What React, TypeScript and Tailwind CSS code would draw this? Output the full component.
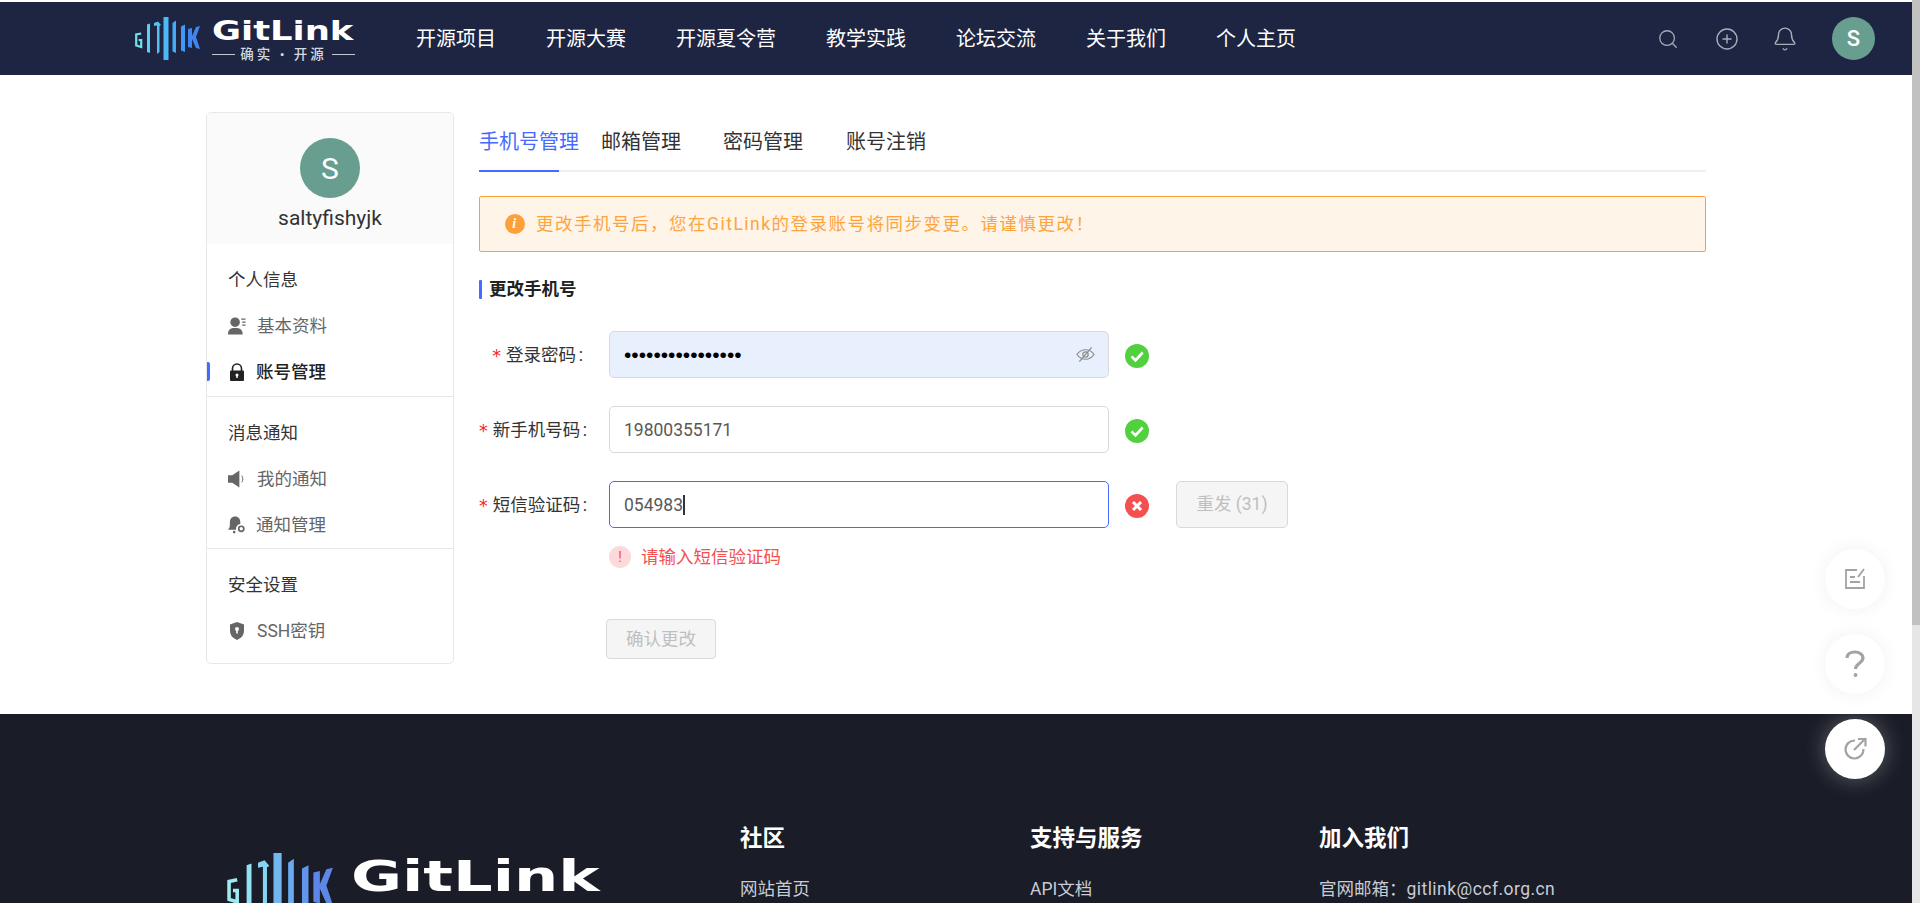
import { Search, CirclePlus, Bell } from 'lucide-react';

const navItems = ['开源项目', '开源大赛', '开源夏令营', '教学实践', '论坛交流', '关于我们', '个人主页'];

function LogoMark({ className, colors }: { className: string; colors: string[] }) {
  return (
    <svg viewBox="0 0 65 43" className={className}>
      {/* G */}
      <path d="M6.200 16.500L1.200 17.500V28.500L6.200 30V23H3.600" fill="none" stroke={colors[0]} strokeWidth="2.200" />
      <path d="M12 7.500l3-1V36l-3-1z" fill={colors[1]} />
      <path d="M19 6l4-1.500 3 3.500-1.500 .8V35l-2.500 2V8.500L19 9z" fill={colors[2]} />
      <rect x="28.500" y="0" width="5" height="43" fill={colors[3]} />
      <path d="M37.500 6l3.500-2.500V36l-3.500-1.500z" fill={colors[4]} />
      <path d="M46 9.500l4-2V35l-4-1.500z" fill={colors[5]} />
      {/* K */}
      <path d="M53 12l4-1v8l4-9 4-1-4 11 4 12-4-1-4-9v9l-4-1z" fill={colors[6]} />
    </svg>
  );
}

function CheckIcon() {
  return (
    <svg viewBox="0 0 24 24" className="w-6 h-6 shrink-0">
      <circle cx="12" cy="12" r="12" fill="#52d13f" />
      <path d="M6.500 12.500l4 3.800 7.200-7.800" fill="none" stroke="#fff" strokeWidth="2.600" />
    </svg>
  );
}

function CrossIcon() {
  return (
    <svg viewBox="0 0 24 24" className="w-6 h-6 shrink-0">
      <circle cx="12" cy="12" r="12" fill="#f4504f" />
      <path d="M8 8l8 8M16 8l-8 8" fill="none" stroke="#fff" strokeWidth="3" />
    </svg>
  );
}

function FieldLabel({ text, className = '' }: { text: string; className?: string }) {
  return (
    <div className={`w-[108px] shrink-0 flex justify-end items-center pt-[1px] whitespace-nowrap text-[17.5px] text-[#333] ${className}`}>
      <span className="text-[#f5222d] mr-[5px] text-[17.5px] leading-none mt-1 font-[family-name:'DejaVu_Sans',sans-serif]">*</span>
      {text}
      <span className="w-[7px] text-right">:</span>
    </div>
  );
}

function SideHeading({ text }: { text: string }) {
  return <div className="h-[46.5px] flex items-center pt-[1px] pl-[21px] text-[17.5px] text-[#333]">{text}</div>;
}

function SideItem({ text, icon, active, gap }: { text: string; icon: React.ReactNode; active?: boolean; gap: string }) {
  return (
    <div className={`relative h-[46.5px] flex items-center pl-[21px] text-[17.5px] ${gap} ${active ? 'text-[#222] font-medium' : 'text-[#666]'}`}>
      {active && <div className="absolute left-[-1px] top-[13px] w-1 h-[19px] rounded-r-[2px] bg-[#466aff]" />}
      {icon}
      <span>{text}</span>
    </div>
  );
}

export default function App() {
  return (
    <div className="flex h-[903px] w-[1920px] overflow-hidden bg-white font-[family-name:Roboto,'Noto_Sans_CJK_SC',sans-serif]">
      <div className="relative w-[1912px] shrink-0">
        {/* Top nav */}
        <header className="mt-[2px] h-[73px] bg-[#1e2542] flex items-center pl-[135px]">
          <div className="relative w-[220px] h-[43px] shrink-0 flex">
            <LogoMark className="w-[65px] h-[43px] shrink-0" colors={['#6fe3ea', '#5fd0ea', '#55c2ee', '#4db8f8', '#45aaf5', '#3f9af2', '#3f86f0']} />
            <div className="ml-[12px] w-[143px] flex flex-col">
              <span className="block origin-left scale-x-[1.36] text-[26px] leading-[26px] mt-[1px] font-bold text-white font-[family-name:'DejaVu_Sans',sans-serif]">GitLink</span>
              <div className="flex items-center mt-[1px] text-[#d6d8de] text-[13.5px] leading-[18px] font-medium">
                <div className="w-[23px] h-px bg-[#c5c8d0]" />
                <span className="flex-1 text-center tracking-[3px] whitespace-nowrap">确实 • 开源</span>
                <div className="w-[23px] h-px bg-[#c5c8d0]" />
              </div>
            </div>
          </div>
          <nav className="ml-[61px] flex items-center gap-[50px] text-[20px] text-white">
            {navItems.map(n => <span key={n} className="whitespace-nowrap">{n}</span>)}
          </nav>
          <div className="ml-auto flex items-center mr-[37px]">
            <Search className="w-[22px] h-[22px] text-[#a9acb8]" strokeWidth={1.4} />
            <CirclePlus className="ml-[36px] w-[24px] h-[24px] text-[#a9acb8]" strokeWidth={1.4} />
            <Bell className="ml-[33px] w-[26px] h-[26px] text-[#a9acb8]" strokeWidth={1.3} />
            <div className="ml-[34px] w-[43px] h-[43px] rounded-full bg-[#689e8f] flex items-center justify-center text-white text-[22px] font-medium">S</div>
          </div>
        </header>

        {/* Content */}
        <main className="h-[639px] pl-[206px] pt-[37px] flex gap-[25px]">
          <aside className="w-[248px] h-[552px] shrink-0 border border-[#e8e8e8] rounded-[5px] overflow-hidden">
            <div className="h-[131px] bg-[#fafafa] flex flex-col items-center pt-[25px]">
              <div className="w-[60px] h-[60px] rounded-full bg-[#689e8f] flex items-center justify-center text-white text-[30px]">S</div>
              <div className="mt-[7px] text-[21px] leading-[26px] text-[#333]">saltyfishyjk</div>
            </div>
            <div className="pt-[12px] border-b border-[#e8e8e8] h-[153px]">
              <SideHeading text="个人信息" />
              <SideItem text="基本资料" gap="gap-[11px]" icon={
                <svg viewBox="0 0 19 18" className="w-[18px] h-[18px]" fill="#666"><circle cx="7.500" cy="5" r="5" /><path d="M0 18c0-5 2-7 7.500-7s8 2 8 7z" /><path d="M14 1h4.500v1.300H14zM15 4.200h3.500v1.300H15zM15 7.400h3.500v1.300H15z" /></svg>
              } />
              <SideItem text="账号管理" active gap="gap-[10px]" icon={
                <svg viewBox="0 0 18 18" className="w-[18px] h-[18px]"><path d="M4.500 8V5.500a4.500 4.500 0 019 0V8" fill="none" stroke="#222" strokeWidth="1.600" /><rect x="2" y="7.500" width="14" height="10.500" rx="1" fill="#222" /><circle cx="9" cy="12" r="1.500" fill="#fff" /><rect x="8.300" y="12" width="1.400" height="3" fill="#fff" /></svg>
              } />
            </div>
            <div className="pt-[12px] border-b border-[#e8e8e8] h-[152px]">
              <SideHeading text="消息通知" />
              <SideItem text="我的通知" gap="gap-[11px]" icon={
                <svg viewBox="0 0 19 18" className="w-[18px] h-[18px]" fill="#666"><path d="M0 5h4.500L12 0v18l-7.500-5H0z" /><path d="M14.500 5.500c1.500 2 1.500 5 0 7" fill="none" stroke="#666" strokeWidth="1" /></svg>
              } />
              <SideItem text="通知管理" gap="gap-[10px]" icon={
                <svg viewBox="0 0 19 18" className="w-[18px] h-[18px]" fill="#666"><path d="M7.500 0c3.500 0 5.500 2.500 5.500 6v2a5 5 0 00-4.500 6H0c1.500-1.500 2-3 2-6V6c0-3.500 2-6 5.500-6z" /><circle cx="6.500" cy="16.500" r="1.400" /><circle cx="14" cy="13" r="2.700" fill="none" stroke="#666" strokeWidth="1.800" /></svg>
              } />
            </div>
            <div className="pt-[12px]">
              <SideHeading text="安全设置" />
              <SideItem text="SSH密钥" gap="gap-[11px]" icon={
                <svg viewBox="0 0 18 18" className="w-[18px] h-[18px]"><path d="M9 0l7 2.500V9c0 4.500-3.500 7.500-7 9-3.500-1.500-7-4.500-7-9V2.500z" fill="#666" /><circle cx="9" cy="7" r="2" fill="#fff" /><rect x="8.200" y="7" width="1.600" height="4.500" fill="#fff" /></svg>
              } />
            </div>
          </aside>

          <section className="w-[1227px]">
            {/* Tabs */}
            <div className="h-[60px] border-b-2 border-[#f0f0f0] flex items-start text-[20px] text-[#333]">
              <div className="relative w-[80px] h-[58px] mr-[42px] whitespace-nowrap pt-[17px] leading-[27px] text-[#466aff]">
                手机号管理
                <div className="absolute left-0 bottom-[-2px] w-[80px] h-[2px] bg-[#466aff]" />
              </div>
              <div className="w-[80px] mr-[42px] pt-[17px] leading-[27px] whitespace-nowrap">邮箱管理</div>
              <div className="w-[80px] mr-[43px] pt-[17px] leading-[27px] whitespace-nowrap">密码管理</div>
              <div className="w-[80px] pt-[17px] leading-[27px] whitespace-nowrap">账号注销</div>
            </div>

            {/* Alert */}
            <div className="mt-[24px] h-[56px] rounded-[2px] border border-[#fda03a] bg-[#fff4e8] flex items-center pl-[25px] text-[17.5px] text-[#fda43f] tracking-[1.5px]">
              <div className="w-5 h-5 rounded-full bg-[#fda03a] text-white flex items-center justify-center text-[14px] leading-none font-bold italic font-[family-name:'Liberation_Serif',serif]">i</div>
              <span className="ml-[11px]">更改手机号后，您在GitLink的登录账号将同步变更。请谨慎更改！</span>
            </div>

            {/* Section title */}
            <div className="mt-[28px] h-[19px] flex items-center">
              <div className="w-[3px] h-[19px] rounded-[1px] bg-[#466aff]" />
              <span className="ml-[7px] text-[17.5px] font-bold text-[#222]">更改手机号</span>
            </div>

            {/* Form */}
            <div className="mt-[32px] flex flex-col gap-[28px]">
              <div className="flex items-center h-[47px]">
                <FieldLabel text="登录密码" className="pr-[4px]" />
                <div className="ml-[22px] relative w-[500px] h-[47px]">
                  <input type="password" readOnly value="1234567890123456" className="w-full h-full rounded-[5px] border border-[#d9d9d9] bg-[#e8f0fe] pl-[14px] pr-[40px] pt-[1px] text-[21px] text-black outline-none font-[family-name:'Liberation_Sans',sans-serif]" />
                  <svg viewBox="0 0 20 20" className="absolute right-[14px] top-[14px] w-[19px] h-[19px]" fill="none" stroke="#8c8c8c" strokeWidth="1.300">
                    <path d="M1 10c2.500-3.500 5.500-5 9-5s6.500 1.500 9 5c-2.500 3.500-5.500 5-9 5s-6.500-1.500-9-5z" />
                    <circle cx="10" cy="10" r="2.800" />
                    <path d="M3.500 17.500L16.500 2.500" />
                  </svg>
                </div>
                <div className="ml-[16px] mt-[2px]"><CheckIcon /></div>
              </div>

              <div className="flex items-center h-[47px]">
                <FieldLabel text="新手机号码" />
                <input readOnly value="19800355171" className="ml-[22px] w-[500px] h-[47px] rounded-[5px] border border-[#d9d9d9] bg-white pl-[14px] pt-[1px] text-[17.5px] text-[#595959] outline-none" />
                <div className="ml-[16px] mt-[2px]"><CheckIcon /></div>
              </div>

              <div className="flex items-center h-[47px]">
                <FieldLabel text="短信验证码" />
                <div className="ml-[22px] w-[500px] h-[47px] rounded-[5px] border border-[#466aff] bg-white pl-[14px] pt-[1px] flex items-center text-[17.5px] text-[#595959]">
                  054983<span className="w-[1.500px] h-[20px] bg-[#333]" />
                </div>
                <div className="ml-[16px] mt-[2px]"><CrossIcon /></div>
                <div className="ml-[27px] w-[112px] h-[47px] rounded-[5px] border border-[#d9d9d9] bg-[#f5f5f5] flex items-center justify-center text-[17.5px] text-[#bfbfbf]">重发 (31)</div>
              </div>
            </div>

            {/* Error */}
            <div className="mt-[18px] ml-[130px] h-[22px] flex items-center">
              <div className="w-[22px] h-[22px] rounded-full bg-[#fcd9da] flex items-center justify-center text-[#f4504f] text-[14px] leading-none">!</div>
              <span className="ml-[10px] text-[17.5px] text-[#f4504f]">请输入短信验证码</span>
            </div>

            <div className="mt-[51px] ml-[127px] w-[110px] h-[40px] rounded-[4px] border border-[#d9d9d9] bg-[#f5f5f5] flex items-center justify-center text-[17.5px] text-[#bfbfbf]">确认更改</div>
          </section>
        </main>

        {/* Footer */}
        <footer className="h-[189px] bg-[#1a1d27] flex pl-[227px] overflow-hidden">
          <div className="w-[513px] shrink-0 pt-[139px] flex">
            <LogoMark className="w-[106px] h-[70px] shrink-0" colors={['#9fe9f2', '#93e2f3', '#85d4f3', '#72b8ef', '#6aaaf0', '#6295ec', '#5c86e8']} />
            <span className="ml-[18px] mt-[3px] block origin-left scale-x-[1.48] text-[42px] leading-[42px] font-bold text-white font-[family-name:'DejaVu_Sans',sans-serif]">GitLink</span>
          </div>
          <div className="w-[290px] shrink-0 pt-[109px]">
            <div className="text-[22.5px] leading-[30px] font-bold text-white">社区</div>
            <div className="mt-[24px] text-[17.5px] leading-[24px] text-[#c9ccd4]">网站首页</div>
          </div>
          <div className="w-[289px] shrink-0 pt-[109px]">
            <div className="text-[22.5px] leading-[30px] font-bold text-white">支持与服务</div>
            <div className="mt-[24px] text-[17.5px] leading-[24px] text-[#c9ccd4]">API文档</div>
          </div>
          <div className="shrink-0 pt-[109px]">
            <div className="text-[22.5px] leading-[30px] font-bold text-white">加入我们</div>
            <div className="mt-[24px] text-[17.5px] leading-[24px] text-[#c9ccd4]">官网邮箱：<span className="tracking-[0.45px]">gitlink@ccf.org.cn</span></div>
          </div>
        </footer>

        {/* Floating buttons */}
        <div className="absolute left-[1825px] top-[549px] flex flex-col gap-[25px]">
          <div className="w-[60px] h-[60px] rounded-full bg-white shadow-[0_0_20px_rgba(0,0,0,0.06)] flex items-center justify-center">
            <svg viewBox="0 0 22 22" className="w-[22px] h-[22px]" fill="none" stroke="#a3a3a3" strokeWidth="1.800">
              <path d="M13 2H2v18h18V8" />
              <path d="M6 9h5M6 14h10" />
              <path d="M14 9l6-8" />
            </svg>
          </div>
          <div className="w-[60px] h-[60px] rounded-full bg-white shadow-[0_0_20px_rgba(0,0,0,0.06)] flex items-center justify-center">
            <svg viewBox="0 0 22 28" className="w-[22px] h-[28px]" fill="none" stroke="#a3a3a3" strokeWidth="3.200">
              <path d="M3 8c0-4 3.500-6 8-6s8 2.500 8 6c0 5-7.500 5.500-7.500 11" />
              <circle cx="11.500" cy="25" r="1.200" fill="#a3a3a3" strokeWidth="1.500" />
            </svg>
          </div>
          <div className="w-[60px] h-[60px] rounded-full bg-white shadow-[0_0_22px_rgba(255,255,255,0.3)] flex items-center justify-center">
            <svg viewBox="0 0 24 24" className="w-[24px] h-[24px]" fill="none" stroke="#a3a3a3" strokeWidth="2.200">
              <path d="M12 3.500A9 9 0 1020.500 12" />
              <path d="M11 13L21.500 2.500" />
              <path d="M15 2h7.500v7.500" />
            </svg>
          </div>
        </div>
      </div>

      {/* Scrollbar */}
      <div className="w-2 h-full bg-[#e6e6e6] shrink-0">
        <div className="h-[625px] bg-[#c1c1c1]" />
      </div>
    </div>
  );
}
